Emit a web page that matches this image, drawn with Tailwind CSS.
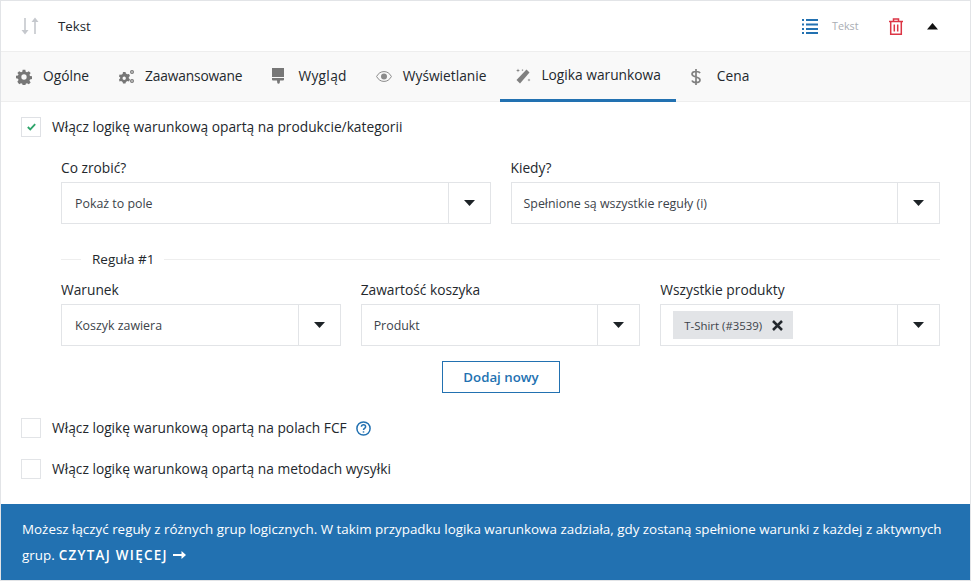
<!DOCTYPE html>
<html lang="pl">
<head>
  <meta charset="UTF-8" />
  <title>Logika warunkowa</title>
  <script src="https://cdn.jsdelivr.net/npm/@tailwindcss/browser@4"></script>
</head>
<body class="bg-white font-['Open_Sans','Noto_Sans',sans-serif] text-[#23282d] text-[13.75px]">
  <div class="w-[971px] h-[581px] border border-[#e2e4e7] flex flex-col overflow-hidden">

    <!-- header -->
    <div class="h-[50px] flex items-center pl-[20px] pr-[32px] shrink-0">
      <svg class="w-[18px] h-[18px]" viewBox="0 0 18 18" fill="#c5c8cd">
        <path d="M3.200 1h1.600v12H7.500L4 17.500.5 13h2.700zM13.200 17h1.600V5h2.700L14 .5 10.500 5h2.700z"/>
      </svg>
      <span class="ml-[19px] pt-px text-[13.25px] font-medium">Tekst</span>
      <div class="ml-auto flex items-center">
        <svg class="w-[16px] h-[16px]" viewBox="0 0 16 16" fill="#2271b1">
          <path d="M0 1h2v2H0zM4 1h12v2H4zM0 5.500h2v2H0zM4 5.500h12v2H4zM0 10h2v2H0zM4 10h12v2H4zM0 14h2v2H0zM4 14h12v2H4z"/>
        </svg>
        <span class="ml-[14px] w-[26px] pt-px text-[10.75px] text-[#a9adb3]">Tekst</span>
        <svg class="ml-[31px] w-[14px] h-[17px]" viewBox="0 0 14 17" fill="none" stroke="#dc3545" stroke-width="1.500">
          <path d="M0 3.500h14M4.500 3.500V1h5v2.500M1.700 3.500v12.700h10.600V3.500M5.300 6.500v7M8.700 6.500v7"/>
        </svg>
        <svg class="ml-[24px] w-[11px] h-[7px]" viewBox="0 0 11 7" fill="#111"><path d="M5.500 0 11 6.500H0z"/></svg>
      </div>
    </div>

    <!-- tabs -->
    <div class="h-[51px] shrink-0 flex bg-[#f9f9f9] border-y border-[#eeeeee] pl-[15px] font-medium">
      <div class="flex items-center gap-[11px] pr-[30px]">
        <svg class="w-[16px] h-[16px]" viewBox="0 0 24 24" fill="#777"><path fill-rule="evenodd" d="M10 1h4l.6 3.200 1.900.8L19.200 3.200l2.800 2.800-1.800 2.700.8 1.900 3 .4v4l-3 .6-.8 1.900 1.800 2.700-2.800 2.800-2.700-1.800-1.900.8-.6 3h-4l-.6-3-1.900-.8-2.700 1.800L2 19.200l1.800-2.700-.8-1.900-3-.6v-4l3-.4.8-1.900L2 6l2.800-2.800L7.500 5l1.900-.8zM12 8a4 4 0 1 0 0 8 4 4 0 0 0 0-8z"/></svg>
        <span>Ogólne</span>
      </div>
      <div class="flex items-center gap-[10px] pr-[30px]">
        <svg class="w-[16px] h-[15px]" viewBox="0 0 16 15" fill="#777"><path fill-rule="evenodd" d="M4 3h2.500l.4 1.500 1.500.8L10 5l1 2-1.200 1 .0 1.300L11 10.500 10 12.500l-1.600-.4-1.500.9L6.500 14.500H4l-.4-1.500-1.500-.9-1.600.4-.5-2 1.200-1.200V8.500L0 7.500l.5-2 1.600.3 1.500-.8zM5.200 7.500a1.700 1.700 0 1 0 0 3.400 1.700 1.700 0 0 0 0-3.400z"/><path fill-rule="evenodd" d="M13 1a2 2 0 1 1 0 4 2 2 0 0 1 0-4zm0 1.200a.8.800 0 1 0 0 1.600.8.800 0 0 0 0-1.600zM13 10a2 2 0 1 1 0 4 2 2 0 0 1 0-4zm0 1.200a.8.800 0 1 0 0 1.600.8.800 0 0 0 0-1.600z"/></svg>
        <span class="tracking-[-0.15px]">Zaawansowane</span>
      </div>
      <div class="flex items-center gap-[13px] pr-[29px]">
        <svg class="w-[13px] h-[17px]" viewBox="0 0 13 17" fill="#777"><path d="M0 0h12v9H0zM0 10h12v1.500a1 1 0 0 1-1 1H8l-.3 2.500a1.300 1.300 0 0 1-2.400 0L5 12.500H1a1 1 0 0 1-1-1z"/></svg>
        <span class="tracking-[0.3px]">Wygląd</span>
      </div>
      <div class="flex items-center gap-[11px] pr-[14px]">
        <svg class="w-[16px] h-[11px]" viewBox="0 0 16 11" fill="none" stroke="#8b8b8b" stroke-width="1"><path d="M.6 5.500C2.500 2 5 .6 8 .6s5.500 1.400 7.400 4.900C13.500 9 11 10.400 8 10.400S2.500 9 .6 5.500z"/><circle cx="8" cy="5.500" r="3" fill="#8b8b8b" stroke="none"/></svg>
        <span>Wyświetlanie</span>
      </div>
      <div class="flex items-center gap-[10px] px-[15px] border-b-[3px] border-[#2271b1] -mb-px">
        <svg class="w-[16px] h-[16px]" viewBox="0 0 16 16" fill="#808080"><path d="M11.500 1.500 14.500 4.500 5 15.500 1.500 12z"/><path d="M3 .5l.5 1.500 1.500.5-1.500.5L3 4.500 2.500 3 1 2.500 2.500 2zM7.500 1l.3.8.8.3-.8.3-.3.8-.3-.8-.8-.3.8-.3zM14 10.500l.4 1.100 1.100.4-1.100.4-.4 1.100-.4-1.100-1.100-.4 1.100-.4z"/></svg>
        <span class="whitespace-nowrap">Logika warunkowa</span>
      </div>
      <div class="flex items-center gap-[16px] pl-[15px]">
        <svg class="w-[10px] h-[16px]" viewBox="0 0 10 16" fill="none" stroke="#808080" stroke-width="1.700"><path d="M5 0v16M9 4.200C8.500 3 7 2.500 5 2.500 2.500 2.500 1 3.500 1 5s1.500 2.300 4 3c2.500.6 4 1.300 4 3s-1.500 2.500-4 2.500c-2 0-3.500-.6-4-2"/></svg>
        <span>Cena</span>
      </div>
    </div>

    <!-- form -->
    <div class="flex-1 pt-[15px] pl-[20px] pr-[30px]">
      <label class="flex items-center gap-[11px] h-[20px] font-medium">
        <span class="w-[20px] h-[20px] border border-[#dfe1e5] flex items-center justify-center">
          <svg class="w-[9px] h-[8px]" viewBox="0 0 11 9" fill="none" stroke="#2ea56b" stroke-width="2.200"><path d="M1 4.500 4 7.500 10 1"/></svg>
        </span>
        <span class="pt-px">Włącz logikę warunkową opartą na produkcie/kategorii</span>
      </label>

      <div class="pl-[40px]">
        <div class="grid grid-cols-2 gap-x-[20px] mt-[20px]">
          <div>
            <div class="h-[20px] leading-[22px] font-medium mb-[5px]">Co zrobić?</div>
            <div class="flex h-[42px] border border-[#e2e4e7] items-center">
              <span class="flex-1 pl-[13px] pt-[2px] text-[12.4px] text-[#3c434a]">Pokaż to pole</span>
              <span class="w-[42px] h-full border-l border-[#e2e4e7] flex items-center justify-center"><svg class="w-[11px] h-[6px]" viewBox="0 0 11 6" fill="#1d2327"><path d="M0 0h11L5.500 6z"/></svg></span>
            </div>
          </div>
          <div>
            <div class="h-[20px] leading-[22px] font-medium mb-[5px]">Kiedy?</div>
            <div class="flex h-[42px] border border-[#e2e4e7] items-center">
              <span class="flex-1 pl-[12px] pt-[2px] text-[12.4px] text-[#3c434a]">Spełnione są wszystkie reguły (i)</span>
              <span class="w-[42px] h-full border-l border-[#e2e4e7] flex items-center justify-center"><svg class="w-[11px] h-[6px]" viewBox="0 0 11 6" fill="#1d2327"><path d="M0 0h11L5.500 6z"/></svg></span>
            </div>
          </div>
        </div>

        <div class="flex items-center mt-[25px] h-[20px] font-medium">
          <span class="w-[20px] h-px bg-[#eeeeee]"></span>
          <span class="pl-[11px] pr-[10px] pt-px text-[13.5px]">Reguła #1</span>
          <span class="flex-1 h-px bg-[#eeeeee]"></span>
        </div>

        <div class="grid grid-cols-3 gap-x-[20px] mt-[10px]">
          <div>
            <div class="h-[20px] leading-[22px] font-medium mb-[5px]">Warunek</div>
            <div class="flex h-[42px] border border-[#e2e4e7] items-center">
              <span class="flex-1 pl-[13px] pt-[2px] text-[12.4px] text-[#3c434a]">Koszyk zawiera</span>
              <span class="w-[42px] h-full border-l border-[#e2e4e7] flex items-center justify-center"><svg class="w-[11px] h-[6px]" viewBox="0 0 11 6" fill="#1d2327"><path d="M0 0h11L5.500 6z"/></svg></span>
            </div>
          </div>
          <div>
            <div class="h-[20px] leading-[22px] font-medium mb-[5px]">Zawartość koszyka</div>
            <div class="flex h-[42px] border border-[#e2e4e7] items-center">
              <span class="flex-1 pl-[12px] pt-[2px] text-[12.4px] text-[#3c434a]">Produkt</span>
              <span class="w-[42px] h-full border-l border-[#e2e4e7] flex items-center justify-center"><svg class="w-[11px] h-[6px]" viewBox="0 0 11 6" fill="#1d2327"><path d="M0 0h11L5.500 6z"/></svg></span>
            </div>
          </div>
          <div>
            <div class="h-[20px] leading-[22px] font-medium mb-[5px]">Wszystkie produkty</div>
            <div class="flex h-[42px] border border-[#e2e4e7] items-center">
              <span class="flex-1 pl-[12px] flex">
                <span class="flex items-center h-[28px] w-[120px] bg-[#e2e4e7] pl-[11px] text-[11.4px] text-[#3c434a] gap-[10px] whitespace-nowrap"><span class="pt-px">T-Shirt (#3539)</span>
                  <svg class="w-[11px] h-[11px]" viewBox="0 0 11 11" stroke="#23282d" stroke-width="2.500"><path d="M1 1l9 9M10 1l-9 9"/></svg>
                </span>
              </span>
              <span class="w-[42px] h-full border-l border-[#e2e4e7] flex items-center justify-center"><svg class="w-[11px] h-[6px]" viewBox="0 0 11 6" fill="#1d2327"><path d="M0 0h11L5.500 6z"/></svg></span>
            </div>
          </div>
        </div>

        <div class="flex justify-center mt-[15px] pl-[1px]">
          <button class="w-[118px] h-[32px] border border-[#2271b1] text-[#2271b1] text-[13.25px] font-semibold"><span class="block pt-px">Dodaj nowy</span></button>
        </div>
      </div>

      <label class="flex items-center gap-[11px] h-[20px] font-medium mt-[25px]">
        <span class="w-[20px] h-[20px] border border-[#e2e4e7]"></span>
        <span class="pt-px">Włącz logikę warunkową opartą na polach FCF</span>
        <svg class="w-[15px] h-[15px] -ml-[2px]" viewBox="0 0 15 15" fill="none" stroke="#2271b1" stroke-width="1.500"><circle cx="7.500" cy="7.500" r="6.600"/><path d="M5.400 5.800c.1-1.300 1-2 2.100-2 1.200 0 2.100.8 2.100 1.900 0 1.600-2.100 1.600-2.100 3.200"/><path d="M7.500 10.300v1.300"/></svg>
      </label>
      <label class="flex items-center gap-[11px] h-[20px] font-medium mt-[21px]">
        <span class="w-[20px] h-[20px] border border-[#e2e4e7]"></span>
        <span class="pt-px">Włącz logikę warunkową opartą na metodach wysyłki</span>
      </label>
    </div>

    <!-- notice -->
    <div class="h-[76px] shrink-0 bg-[#2271b1] text-white text-[13.4px] pl-[21px] pt-[12px] leading-[26px] whitespace-nowrap">
      <div>Możesz łączyć reguły z różnych grup logicznych. W takim przypadku logika warunkowa zadziała, gdy zostaną spełnione warunki z każdej z aktywnych</div>
      <div class="flex items-center">
        <span>grup.</span>
        <span class="ml-[4px] font-semibold tracking-[1.3px]">CZYTAJ WIĘCEJ</span>
        <svg class="ml-[5px] w-[13px] h-[8px]" viewBox="0 0 13 8" fill="#fff"><path d="M0 3h8.500V0L13 4 8.500 8V5H0z"/></svg>
      </div>
    </div>
  </div>
</body>
</html>
